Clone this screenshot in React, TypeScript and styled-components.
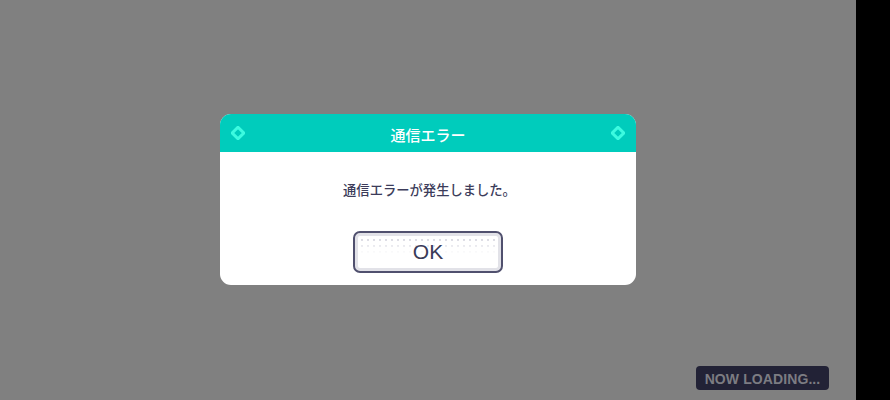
import React from "react";
import styled, { createGlobalStyle } from "styled-components";

const Global = createGlobalStyle`
  html, body { margin: 0; padding: 0; }
  body {
    width: 890px;
    height: 400px;
    overflow: hidden;
    background: #000;
    font-family: "Noto Sans CJK JP", "Noto Sans", sans-serif;
  }
`;

const Screen = styled.div`
  display: flex;
  width: 890px;
  height: 400px;
`;

const Stage = styled.div`
  position: relative;
  flex: 0 0 856px;
  height: 400px;
  background: #808080;
  display: flex;
  align-items: center;
  justify-content: center;
`;

const SideBar = styled.div`
  flex: 1;
  background: #000;
`;

const Dialog = styled.div`
  width: 416px;
  height: 171px;
  margin-top: -1px;
  background: #fff;
  border-radius: 11px;
  overflow: hidden;
  display: flex;
  flex-direction: column;
`;

const Header = styled.div`
  height: 38px;
  flex: 0 0 38px;
  background: #00ccbc;
  display: flex;
  align-items: center;
  justify-content: space-between;
  padding: 0 11px 0 11px;
  box-sizing: border-box;
`;

const Title = styled.div`
  color: #fff;
  font-size: 15px;
  font-weight: 500;
  padding-top: 2px;
`;

const Body = styled.div`
  flex: 1;
  display: flex;
  flex-direction: column;
  align-items: center;
  padding-top: 28px;
`;

const Message = styled.div`
  color: #3c3c5a;
  font-size: 13.3px;
  font-weight: 500;
  line-height: 20px;
  padding-left: 3px;
`;

const OkButton = styled.button`
  margin-top: 31px;
  width: 150px;
  height: 42px;
  border: 2px solid #50506e;
  border-radius: 7px;
  background-color: #fff;
  box-shadow: inset 0 0 0 3px #e2e2e8;
  color: #3a3a58;
  font-family: "Liberation Sans", "Noto Sans", sans-serif;
  font-size: 21px;
  padding: 0 0 1px 0;
  display: flex;
  align-items: center;
  justify-content: center;
  position: relative;
  overflow: hidden;
  &::before {
    content: "";
    position: absolute;
    left: 3px;
    right: 3px;
    top: 3px;
    height: 18px;
    background-image: radial-gradient(circle, #dcdce4 1.1px, transparent 1.5px);
    background-size: 6px 6px;
    background-position: 1px 1px;
  }
  &::after {
    content: "";
    position: absolute;
    left: 3px;
    right: 3px;
    top: 3px;
    height: 18px;
    background: linear-gradient(to bottom, rgba(255,255,255,0) 20%, rgba(255,255,255,1));
  }
`;

const OkLabel = styled.span`
  position: relative;
  z-index: 1;
`;

const Loading = styled.div`
  position: absolute;
  right: 27px;
  bottom: 10px;
  width: 133px;
  height: 24px;
  box-sizing: border-box;
  background: #222236;
  border-radius: 4px;
  color: #7c7c82;
  font-family: "Liberation Sans", "Noto Sans", sans-serif;
  font-weight: 700;
  font-size: 14px;
  letter-spacing: 0.1px;
  display: flex;
  align-items: center;
  justify-content: center;
  padding-top: 1px;
`;

const Diamond = () => (
  <svg width="14" height="14" viewBox="0 0 14 14">
    <path
      d="M7 1.2 L12.8 7 L7 12.8 L1.2 7 Z"
      fill="none"
      stroke="#3cfbe0"
      strokeWidth="3"
      strokeLinejoin="miter"
    />
  </svg>
);

export default function App() {
  return (
    <>
      <Global />
      <Screen>
        <Stage>
          <Dialog>
            <Header>
              <Diamond />
              <Title>通信エラー</Title>
              <Diamond />
            </Header>
            <Body>
              <Message>通信エラーが発生しました。</Message>
              <OkButton>
                <OkLabel>OK</OkLabel>
              </OkButton>
            </Body>
          </Dialog>
          <Loading>NOW LOADING...</Loading>
        </Stage>
        <SideBar />
      </Screen>
    </>
  );
}
